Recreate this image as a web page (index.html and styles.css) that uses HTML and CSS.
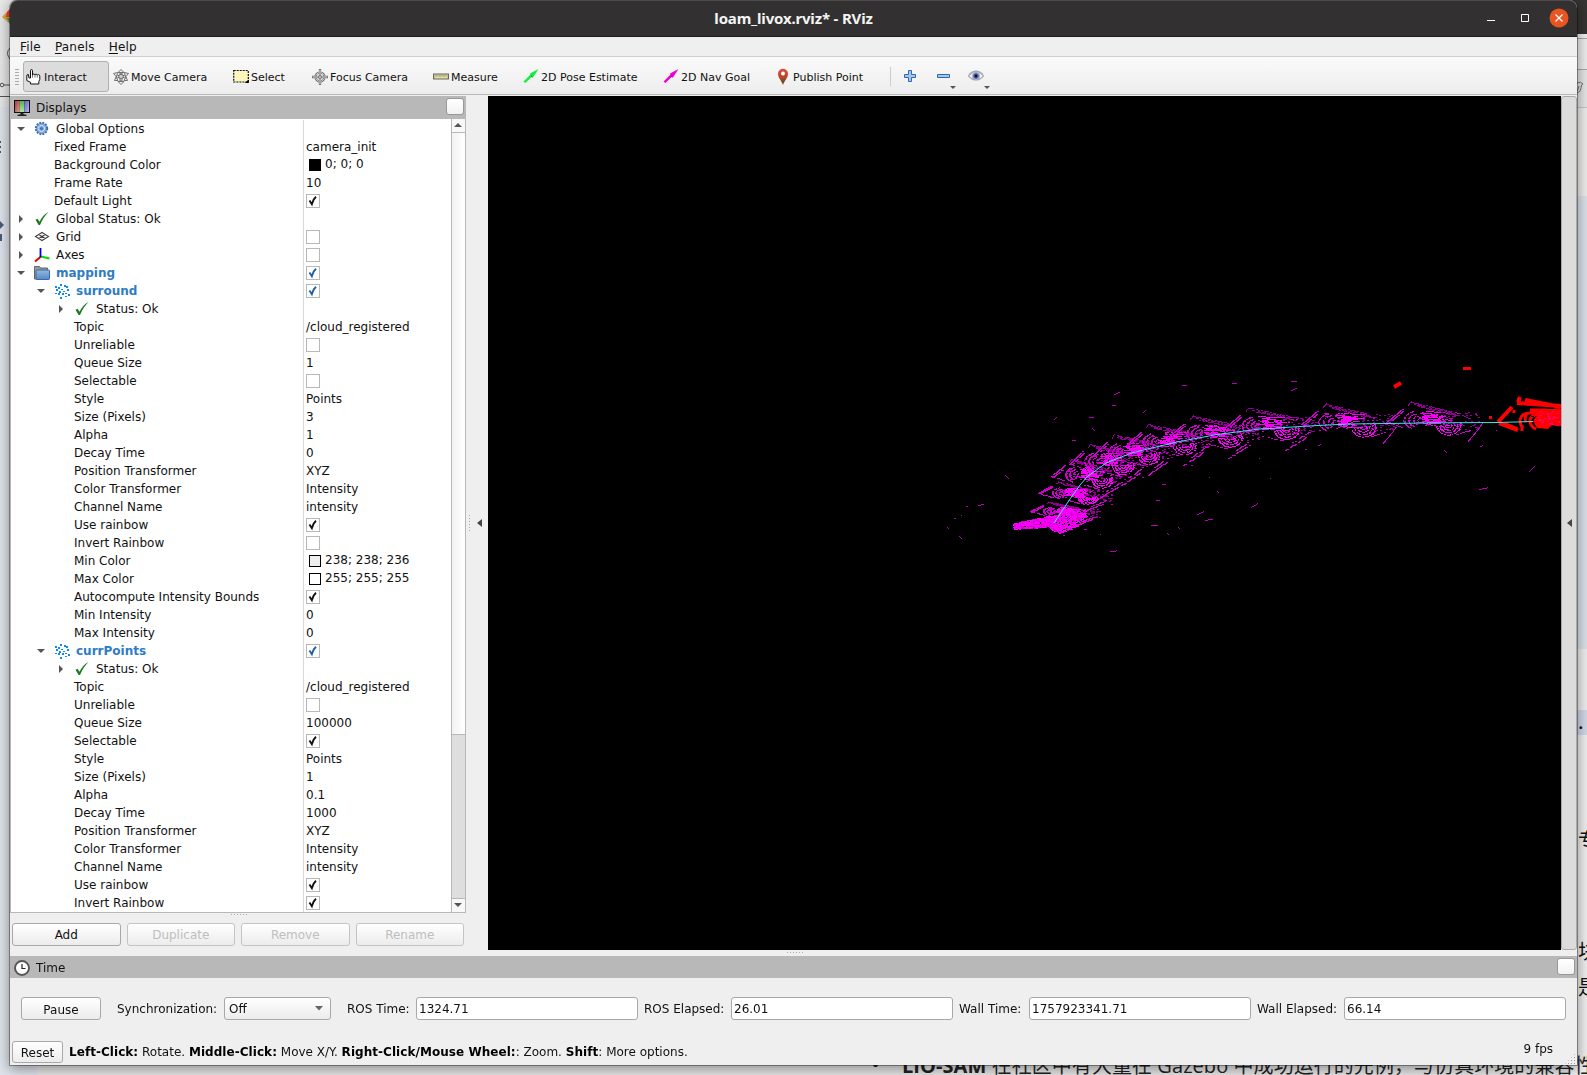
FILE: index.html
```html
<!DOCTYPE html>
<html lang="en">
<head>
<meta charset="utf-8">
<title>loam_livox.rviz* - RViz</title>
<link rel="stylesheet" href="styles.css">
</head>
<body>
<svg class="defs" width="0" height="0" aria-hidden="true">
  <defs>
    <linearGradient id="g-red" x1="0" y1="0" x2="1" y2="1"><stop offset="0" stop-color="#a03c3c"/><stop offset="1" stop-color="#e89a94"/></linearGradient>
    <linearGradient id="g-green" x1="0" y1="0" x2="0" y2="1"><stop offset="0" stop-color="#58b058"/><stop offset="1" stop-color="#a8e8a0"/></linearGradient>
    <linearGradient id="g-blue" x1="0" y1="0" x2="1" y2="1"><stop offset="0" stop-color="#6464b4"/><stop offset="1" stop-color="#b4b4f4"/></linearGradient>
    <linearGradient id="g-pin" x1="0" y1="0" x2="0" y2="1"><stop offset="0" stop-color="#e0503a"/><stop offset=".5" stop-color="#b8482a"/><stop offset="1" stop-color="#4e4420"/></linearGradient>
    <linearGradient id="g-folder" x1="0" y1="0" x2="0" y2="1"><stop offset="0" stop-color="#92b8e4"/><stop offset="1" stop-color="#5688c4"/></linearGradient>
    <symbol id="i-down" viewBox="0 0 8 8"><path d="M0 2h8L4 6z" fill="#555"/></symbol>
    <symbol id="i-right" viewBox="0 0 8 8"><path d="M2 0v8l4-4z" fill="#555"/></symbol>
    <symbol id="i-ok" viewBox="0 0 16 16"><path d="M1.500 8.700l2-.9 2 3C7.500 6.500 10.500 3 14.500 1 11 4.500 8.500 8 6 14H4.600z" fill="#1c7a20"/></symbol>
    <symbol id="i-gear" viewBox="0 0 16 16"><circle cx="7.500" cy="7.500" r="5.700" fill="#7ba4dc" stroke="#3c6cb4" stroke-width="2" stroke-dasharray="1.800 1.200"/><circle cx="7.500" cy="7.500" r="4.800" fill="#86abe0"/><circle cx="7.500" cy="7.500" r="2.900" fill="none" stroke="#fff" stroke-width="1" stroke-dasharray="1.500 .8"/><circle cx="7.500" cy="7.500" r="1.600" fill="#4474bc"/></symbol>
    <symbol id="i-grid" viewBox="0 0 16 16"><path d="M1.500 7.500L8 3.500l6.500 4L8 11.500zM4.700 5.500l6.600 4M11.300 5.500l-6.600 4" fill="none" stroke="#444" stroke-width="1.100"/></symbol>
    <symbol id="i-axes" viewBox="0 0 16 16"><path d="M7 9.500L1 14.500" stroke="#e00000" stroke-width="2"/><path d="M7 9.500l8.500 2" stroke="#00e000" stroke-width="2"/><path d="M6.500 1v9" stroke="#0000f0" stroke-width="1.800"/></symbol>
    <symbol id="i-folder" viewBox="0 0 16 16"><path d="M.5 14V1.500h5l1 1.500h7v11z" fill="#999" stroke="#666"/><rect x="2" y="5" width="13.500" height="9.500" rx=".7" fill="url(#g-folder)" stroke="#3a6aaa"/></symbol>
    <symbol id="i-cloud" viewBox="0 0 16 16" shape-rendering="crispEdges"><path d="M6 1h2v2H6zM1 3h2v2H1zM4 4h2v2H4zM10 2h2v2h-2zM12 3h2v2h-2zM2 6h2v2H2zM7 6h2v1H7zM13 6h2v2h-2zM5 8h2v2H5zM9 8h2v1H9zM1 10h2v1H1zM4 10h2v2H4zM8 10h2v2H8zM11 10h2v1h-2zM14 11h2v2h-2zM6 14h2v2H6zM11 13h2v1h-2z" fill="#0f8af0"/></symbol>
    <symbol id="i-check" viewBox="0 0 14 14"><path d="M3.500 6.600l2.300 3.600C6.500 7.200 8 4.500 10 2.800" fill="none" stroke="currentColor" stroke-width="1.900"/></symbol>
    <symbol id="i-monitor" viewBox="0 0 16 16"><path d="M0 0h16v13H0z" fill="#111"/><path d="M1 1h4.700v11H1z" fill="url(#g-red)"/><path d="M5.700 1h4.600v11H5.700z" fill="url(#g-green)"/><path d="M10.300 1H15v11h-4.700z" fill="url(#g-blue)"/><path d="M6.500 13h3v1.300l3 .5v1.200h-9v-1.200l3-.5z" fill="#222"/></symbol>
    <symbol id="i-clock" viewBox="0 0 16 16"><circle cx="8" cy="8" r="7" fill="#fff" stroke="#555" stroke-width="1.900"/><path d="M8 4V8.500h3.500" fill="none" stroke="#222" stroke-width="1.200"/></symbol>
    <symbol id="i-hand" viewBox="0 0 16 16"><path d="M4.500 9V1.700q0-1.200 1-1.200t1 1.200V6q.2-1 1.200-1t1.300 1q.2-.8 1.100-.8t1.200 1q.2-.6 1.200-.6 1.300.2 1.300 1.600v3.200l-1 2.100v2.500H4.500v-1.700L.8 11.500V7q0-1.700 1.600-1.500L3 9z" fill="#fff" stroke="#111" stroke-width="1"/><path d="M6.500 6v2.500M9 6v2.500M11.300 6.300v2.200" stroke="#444" stroke-width=".8"/></symbol>
    <symbol id="i-move" viewBox="0 0 16 16"><g fill="#eee" stroke="#555" stroke-width=".8"><path d="M7 4v8h2V4zM3 5.500l10 4M13 5.500l-10 4"/><path d="M8 .5l3 3H5zM8 15.500l-3-3h6z"/><path d="M.5 4.500l4-1L3.500 8zM15.500 4.500l-4-1 1 4.500zM1.500 11.500L3 8l2 3.500zM14.500 11.500L13 8l-2 3.500z"/><circle cx="8" cy="7.500" r="2.300" fill="#ccc"/></g></symbol>
    <symbol id="i-select" viewBox="0 0 16 16"><path d="M.7 1.500h14.600v11.500H.7z" fill="#fcf6bc" stroke="#111" stroke-width="1.200" stroke-dasharray="2 1"/><path d="M15.800 10.500V14h-4z" fill="#000"/></symbol>
    <symbol id="i-focus" viewBox="0 0 16 16"><circle cx="8" cy="8" r="4.500" fill="none" stroke="#666" stroke-width="2.200"/><circle cx="8" cy="8" r="4.500" fill="none" stroke="#ddd" stroke-width=".9"/><path d="M8 0v16M0 8h16" stroke="#777" stroke-width="2.300"/><path d="M8 1v14M1 8h14" stroke="#ddd" stroke-width=".9"/><circle cx="8" cy="8" r="1.500" fill="#ccc" stroke="#666" stroke-width=".7"/></symbol>
    <symbol id="i-measure" viewBox="0 0 16 16"><path d="M.6 5h14.800v5H.6z" fill="#e6dc9c" stroke="#666" stroke-width="1.200"/><path d="M3 5.500V8M5 5.500v2M7 5.500V8M9 5.500v2M11 5.500V8M13 5.500v2" stroke="#776" stroke-width=".7"/></symbol>
    <symbol id="i-arrow" viewBox="0 0 16 16"><path d="M.5 12.500l7-7L7 4.500 15.500 0 10 8.500l-1.400-.4L2.400 14z" fill="currentColor"/><path d="M7.500 5.500l1 2.700 1.500.3z" fill="#333" opacity=".6"/></symbol>
    <symbol id="i-pin" viewBox="0 0 12 18"><path d="M6 17C4.500 12.500 1 10 1 5.800A5 5 0 0 1 11 5.800C11 10 7.500 12.500 6 17z" fill="url(#g-pin)"/><circle cx="6" cy="5.500" r="1.900" fill="#fff"/></symbol>
    <symbol id="i-eye" viewBox="0 0 16 16"><path d="M.5 8Q8-1 15.500 8 8 16 .5 8z" fill="#f4f4f4" stroke="#aaa" stroke-width="1.200"/><path d="M1 6.500Q8-.5 15 6.500" fill="none" stroke="#aaa" stroke-width="1.300"/><circle cx="8" cy="8" r="3.900" fill="#9aaad8"/><circle cx="8" cy="8" r="2.700" fill="#5068ac"/><circle cx="8" cy="8" r="1.400" fill="#0a0a18"/></symbol>
  </defs>
</svg>

<div class="desktop" aria-hidden="true">
  <div class="behind-left"></div>
  <div class="behind-right"></div>
  <span class="doc-char c1">专</span>
  <span class="doc-char c2">块</span>
  <span class="doc-char c3">是</span>
  <span class="doc-char c4">.</span>
  <svg class="edge-marks" width="10" height="250"><path d="M2 17L10 9V24z" fill="#e8a43a"/><path d="M7 12l3-3v8H6z" fill="#ea4335"/><path d="M7 18h3v6z" fill="#2aa866"/><path d="M10 48q-5 5 0 11" fill="none" stroke="#555"/><circle cx="2" cy="85" r="1.800" fill="none" stroke="#555"/><path d="M4 85h6M0 96.500h10" stroke="#555"/><path d="M0 142h1M0 147h1M0 152h1" stroke="#555" stroke-width="2"/><path d="M0 221l4 4-4 4zM0 234h2v7H0z" fill="#4a5c80"/></svg>
  <svg class="edge-marks-right" width="10" height="20"><path d="M0 3q4-2 6 1-2 0-2 4 0 4-4 5M2 6q-1 4-2 5" fill="none" stroke="#777"/></svg>
  <p class="doc-line"><span class="bullet">•</span><b>LIO-SAM</b> 在社区中有大量在 Gazebo 中成功运行的先例，与仿真环境的兼容性</p>
</div>

<main class="window">
  <header class="titlebar">
    <span class="title">loam_livox.rviz* - RViz</span>
    <div class="win-buttons">
      <svg width="12" height="12"><path d="M2 8.500h8" stroke="#fff"/></svg>
      <svg width="12" height="12"><path d="M2.500 2.500h7v7h-7z" fill="none" stroke="#fff"/></svg>
      <svg width="20" height="20"><circle cx="10" cy="10" r="9.500" fill="#e95420"/><path d="M6.500 6.500l7 7M13.500 6.500l-7 7" stroke="#fff" stroke-width="1.300"/></svg>
    </div>
  </header>
  <nav class="menubar"><span><u>F</u>ile</span><span><u>P</u>anels</span><span><u>H</u>elp</span></nav>
  <div class="toolbar">
    <i class="grip"></i>
    <button class="tool t-interact active"><svg><use href="#i-hand"/></svg>Interact</button>
    <button class="tool t-move"><svg><use href="#i-move"/></svg>Move Camera</button>
    <button class="tool t-select"><svg><use href="#i-select"/></svg>Select</button>
    <button class="tool t-focus"><svg><use href="#i-focus"/></svg>Focus Camera</button>
    <button class="tool t-measure"><svg><use href="#i-measure"/></svg>Measure</button>
    <button class="tool t-pose"><svg class="green"><use href="#i-arrow"/></svg>2D Pose Estimate</button>
    <button class="tool t-goal"><svg class="magenta"><use href="#i-arrow"/></svg>2D Nav Goal</button>
    <button class="tool t-pin"><svg class="pin"><use href="#i-pin"/></svg>Publish Point</button>
    <i class="sep"></i>
    <svg class="plus" width="12" height="12"><path d="M4.500.5h3v4h4v3h-4v4h-3v-4h-4v-3h4z" fill="#a4c6ee" stroke="#3468ac"/></svg>
    <svg class="minus" width="20" height="24"><path d="M.5 9.500h12v3H.5z" fill="#a4c6ee" stroke="#3468ac"/><path d="M13 21h6l-3 3z" fill="#555"/></svg>
    <svg class="eye" width="22" height="24"><use href="#i-eye" x="0" y="3" width="16" height="16"/><path d="M16 21h6l-3 3z" fill="#555"/></svg>
  </div>

  <div class="workspace">
    <section class="displays">
      <div class="dock-title"><svg><use href="#i-monitor"/></svg>Displays<i class="dock-btn"></i></div>
      <div class="tree-box">
        <div class="tree">
          <div class="row l0"><b class="n"><svg class="tw"><use href="#i-down"/></svg><svg class="ic"><use href="#i-gear"/></svg>Global Options</b><span class="v"></span></div>
          <div class="row p1"><b class="n">Fixed Frame</b><span class="v">camera_init</span></div>
          <div class="row p1"><b class="n">Background Color</b><span class="v color"><i class="black"></i>0; 0; 0</span></div>
          <div class="row p1"><b class="n">Frame Rate</b><span class="v">10</span></div>
          <div class="row p1"><b class="n">Default Light</b><span class="v"><i class="cb"><svg><use href="#i-check"/></svg></i></span></div>
          <div class="row l0"><b class="n"><svg class="tw"><use href="#i-right"/></svg><svg class="ic"><use href="#i-ok"/></svg>Global Status: Ok</b><span class="v"></span></div>
          <div class="row l0"><b class="n"><svg class="tw"><use href="#i-right"/></svg><svg class="ic"><use href="#i-grid"/></svg>Grid</b><span class="v"><i class="cb"></i></span></div>
          <div class="row l0"><b class="n"><svg class="tw"><use href="#i-right"/></svg><svg class="ic"><use href="#i-axes"/></svg>Axes</b><span class="v"><i class="cb"></i></span></div>
          <div class="row l0 on"><b class="n"><svg class="tw"><use href="#i-down"/></svg><svg class="ic"><use href="#i-folder"/></svg>mapping</b><span class="v"><i class="cb"><svg><use href="#i-check"/></svg></i></span></div>
          <div class="row l1 on"><b class="n"><svg class="tw"><use href="#i-down"/></svg><svg class="ic"><use href="#i-cloud"/></svg>surround</b><span class="v"><i class="cb"><svg><use href="#i-check"/></svg></i></span></div>
          <div class="row l2"><b class="n"><svg class="tw"><use href="#i-right"/></svg><svg class="ic"><use href="#i-ok"/></svg>Status: Ok</b><span class="v"></span></div>
          <div class="row p2"><b class="n">Topic</b><span class="v">/cloud_registered</span></div>
          <div class="row p2"><b class="n">Unreliable</b><span class="v"><i class="cb"></i></span></div>
          <div class="row p2"><b class="n">Queue Size</b><span class="v">1</span></div>
          <div class="row p2"><b class="n">Selectable</b><span class="v"><i class="cb"></i></span></div>
          <div class="row p2"><b class="n">Style</b><span class="v">Points</span></div>
          <div class="row p2"><b class="n">Size (Pixels)</b><span class="v">3</span></div>
          <div class="row p2"><b class="n">Alpha</b><span class="v">1</span></div>
          <div class="row p2"><b class="n">Decay Time</b><span class="v">0</span></div>
          <div class="row p2"><b class="n">Position Transformer</b><span class="v">XYZ</span></div>
          <div class="row p2"><b class="n">Color Transformer</b><span class="v">Intensity</span></div>
          <div class="row p2"><b class="n">Channel Name</b><span class="v">intensity</span></div>
          <div class="row p2"><b class="n">Use rainbow</b><span class="v"><i class="cb"><svg><use href="#i-check"/></svg></i></span></div>
          <div class="row p2"><b class="n">Invert Rainbow</b><span class="v"><i class="cb"></i></span></div>
          <div class="row p2"><b class="n">Min Color</b><span class="v color"><i class="grey"></i>238; 238; 236</span></div>
          <div class="row p2"><b class="n">Max Color</b><span class="v color"><i></i>255; 255; 255</span></div>
          <div class="row p2"><b class="n">Autocompute Intensity Bounds</b><span class="v"><i class="cb"><svg><use href="#i-check"/></svg></i></span></div>
          <div class="row p2"><b class="n">Min Intensity</b><span class="v">0</span></div>
          <div class="row p2"><b class="n">Max Intensity</b><span class="v">0</span></div>
          <div class="row l1 on"><b class="n"><svg class="tw"><use href="#i-down"/></svg><svg class="ic"><use href="#i-cloud"/></svg>currPoints</b><span class="v"><i class="cb"><svg><use href="#i-check"/></svg></i></span></div>
          <div class="row l2"><b class="n"><svg class="tw"><use href="#i-right"/></svg><svg class="ic"><use href="#i-ok"/></svg>Status: Ok</b><span class="v"></span></div>
          <div class="row p2"><b class="n">Topic</b><span class="v">/cloud_registered</span></div>
          <div class="row p2"><b class="n">Unreliable</b><span class="v"><i class="cb"></i></span></div>
          <div class="row p2"><b class="n">Queue Size</b><span class="v">100000</span></div>
          <div class="row p2"><b class="n">Selectable</b><span class="v"><i class="cb"><svg><use href="#i-check"/></svg></i></span></div>
          <div class="row p2"><b class="n">Style</b><span class="v">Points</span></div>
          <div class="row p2"><b class="n">Size (Pixels)</b><span class="v">1</span></div>
          <div class="row p2"><b class="n">Alpha</b><span class="v">0.1</span></div>
          <div class="row p2"><b class="n">Decay Time</b><span class="v">1000</span></div>
          <div class="row p2"><b class="n">Position Transformer</b><span class="v">XYZ</span></div>
          <div class="row p2"><b class="n">Color Transformer</b><span class="v">Intensity</span></div>
          <div class="row p2"><b class="n">Channel Name</b><span class="v">intensity</span></div>
          <div class="row p2"><b class="n">Use rainbow</b><span class="v"><i class="cb"><svg><use href="#i-check"/></svg></i></span></div>
          <div class="row p2"><b class="n">Invert Rainbow</b><span class="v"><i class="cb"><svg><use href="#i-check"/></svg></i></span></div>
        </div>
        <div class="scrollbar">
          <svg class="up" width="14" height="13"><path d="M2 8h8L6 4z" fill="#555"/></svg>
          <i class="thumb"></i>
          <svg class="dn" width="14" height="14"><path d="M2 4h8L6 8z" fill="#555"/></svg>
        </div>
      </div>
      <i class="dots-h"></i>
      <div class="actions"><button class="btn">Add</button><button class="btn off">Duplicate</button><button class="btn off">Remove</button><button class="btn off">Rename</button></div>
    </section>
    <div class="splitter"><i class="dots-v"></i><svg width="5" height="8"><path d="M5 0v8L0 4z" fill="#444"/></svg></div>
    <canvas id="view" class="view" width="1073" height="854"></canvas>
    <div class="collapse"><svg width="5" height="8"><path d="M5 0v8L0 4z" fill="#444"/></svg></div>
  </div>
  <div class="hsplit"><i class="dots-h"></i></div>

  <section class="time">
    <div class="dock-title"><svg><use href="#i-clock"/></svg>Time<i class="dock-btn"></i></div>
    <div class="time-row">
      <button class="btn pause">Pause</button>
      <span class="lb-sync">Synchronization:</span><div class="combo">Off<svg width="8" height="5"><path d="M0 0h8L4 4.500z" fill="#666"/></svg></div>
      <span class="lb-rt">ROS Time:</span><div class="field">1324.71</div>
      <span class="lb-re">ROS Elapsed:</span><div class="field">26.01</div>
      <span class="lb-wt">Wall Time:</span><div class="field">1757923341.71</div>
      <span class="lb-we">Wall Elapsed:</span><div class="field">66.14</div>
    </div>
  </section>
  <footer class="status">
    <button class="btn reset">Reset</button>
    <p><b>Left-Click:</b> Rotate. <b>Middle-Click:</b> Move X/Y. <b>Right-Click/Mouse Wheel:</b>: Zoom. <b>Shift</b>: More options.</p>
    <span class="fps">9 fps</span>
    <i class="size-grip"></i>
  </footer>
</main>
<script src="cloud.js"></script>
</body>
</html>
```
FILE: styles.css
```css
* { box-sizing: border-box; }
body { margin: 0; width: 1587px; height: 1075px; overflow: hidden; position: relative; background: #e9e9e9; font: 12px "DejaVu Sans", sans-serif; color: #111; }
button { font: inherit; color: inherit; margin: 0; padding: 0; }
i { font-style: normal; display: block; flex: none; }
svg { display: block; flex: none; }
.defs { position: absolute; }

.desktop { position: absolute; inset: 0; overflow: hidden; }
.behind-left { position: absolute; left: 0; top: 107px; width: 37px; height: 968px; background: #e0e5ed; }
.behind-right { position: absolute; left: 1570px; top: 0; width: 17px; height: 1075px; background: linear-gradient(#363533 0 34px, #f2f2f2 34px 38px, #aaa 38px 39px, #f0f0f0 39px 69px, #aaa 69px 70px, #e8e8e8 70px 107px, #c8c8c8 107px 108px, #f0efee 108px 196px, #dfe4ec 196px 649px, #f0f0f0 649px 710px, #d4dae8 710px 735px, #f1f1f1 735px); }
.edge-marks { position: absolute; left: 0; top: 0; }
.edge-marks-right { position: absolute; left: 1577px; top: 80px; }
.doc-char { position: absolute; left: 1578px; font: 20px/24px "Noto Sans CJK SC", sans-serif; }
.c1 { top: 828px; } .c2 { top: 939px; } .c3 { top: 975px; } .c4 { left: 1578px; top: 709px; }
.doc-line { position: absolute; left: 871px; top: 1049px; margin: 0; width: 740px; white-space: nowrap; font: 20px/34px "Open Sans", "Noto Sans CJK SC", sans-serif; color: #222; letter-spacing: .06px; }
.bullet { display: inline-block; width: 31px; font-size: 24px; line-height: 20px; height: 20px; }

.window { position: relative; margin-left: 10px; width: 1567px; height: 1065px; background: #efefef; display: flex; flex-direction: column; border-radius: 8px 8px 0 0; box-shadow: 0 0 0 1px rgba(0,0,0,.35), 0 3px 14px 1px rgba(0,0,0,.42); }
.titlebar { height: 37px; flex: none; display: flex; align-items: center; justify-content: center; background: #323030; border-top: 1px solid #4c4a4a; border-bottom: 1px solid #1e1c1c; border-radius: 8px 8px 0 0; position: relative; color: #f4f4f4; }
.title { font: bold 15px "Noto Sans", sans-serif; letter-spacing: -.18px; margin-top: -2px; }
.win-buttons { position: absolute; right: 8px; top: 7px; display: flex; align-items: center; gap: 22px; }
.win-buttons svg:last-child { margin-left: -4px; }
.menubar { height: 20px; flex: none; display: flex; padding-left: 10px; gap: 14px; line-height: 20px; letter-spacing: .2px; border-bottom: 1px solid #d0d0d0; }
.menubar u { text-underline-offset: 2px; }

.toolbar { height: 38px; flex: none; display: flex; align-items: center; background: linear-gradient(#fafafa, #ededed); border-bottom: 1px solid #b8b8b8; padding: 1px 0 0 5px; font-size: 11px; }
.grip { width: 4px; height: 17px; margin-right: 4px; background: radial-gradient(circle, #aaa .7px, transparent .8px) 0 0 / 2px 3px; }
.tool { display: flex; align-items: center; gap: 2px; height: 31px; flex: none; padding: 2px 0 0 2px; border: 1px solid transparent; background: none; text-align: left; white-space: nowrap; }
.tool svg { width: 16px; height: 16px; margin-top: -1px; }
.tool.active { background: #dcdcdc; border-color: #b0b0b0; border-radius: 3px; }
.t-interact { width: 86px; margin-right: 1px; }
.t-move { width: 120px; } .t-select { width: 79px; } .t-focus { width: 121px; } .t-measure { width: 90px; }
.t-pose { width: 140px; } .t-goal { width: 115px; } .t-pin { width: 116px; }
.tool .pin { width: 12px; height: 18px; margin-right: 2px; }
.t-pin { margin-left: -1px; }
.green { color: #12f03c; } .magenta { color: #f000d8; }
.sep { width: 1px; height: 19px; background: #ccc; margin-right: 13px; }
.plus { margin-right: 21px; }
.minus { margin: 2px 11px 0 0; }
.eye { margin-top: 2px; }

.workspace { display: flex; height: 854px; padding-top: 1px; flex: none; }
.displays { width: 456px; display: flex; flex-direction: column; }
.dock-title { height: 23px; flex: none; display: flex; align-items: center; background: #b8b8b8; padding: 0 2px 0 4px; }
.dock-title svg { width: 16px; height: 16px; margin-right: 6px; }
.dock-btn { margin: -2px 0 0 auto; width: 18px; height: 17px; border: 1px solid #999; border-radius: 3px; background: linear-gradient(#fff, #f2f2f2); }
.tree-box { display: flex; height: 794px; flex: none; border: 1px solid #b8b8b8; border-top: 0; background: #fff; }
.tree { flex: 1; padding-top: 1px; overflow: hidden; }
.row { display: grid; grid-template-columns: 293px 1fr; height: 18px; line-height: 18px; white-space: nowrap; }
.n { display: flex; align-items: center; height: 18px; font-weight: normal; border-right: 1px solid #d8d8d8; }
.on .n { font-weight: bold; color: #2e7cc4; }
.tw { width: 8px; height: 8px; margin: -1px 9px 0 6px; }
.ic { width: 16px; height: 16px; margin: -1px 6px 0 0; }
.l1 .n { padding-left: 20px; } .l2 .n { padding-left: 40px; }
.p1 .n { padding-left: 43px; } .p2 .n { padding-left: 63px; }
.v { display: flex; align-items: center; height: 18px; padding-left: 2px; }
.cb { width: 14px; height: 14px; margin-top: -1px; border: 1px solid #b8b8b8; background: #fff; }
.cb svg { width: 14px; height: 14px; margin: -1px; overflow: visible; }
.on .cb { color: #1c60a8; }
.color { padding: 0 0 2px 5px; }
.color i { width: 12px; height: 12px; margin: 1px 4px 0 0; border: 1px solid #000; background: #fff; }
.color .black { background: #000; } .color .grey { background: #eeeeec; }
.scrollbar { width: 14px; border-left: 1px solid #b8b8b8; background: #dedede; display: flex; flex-direction: column; }
.scrollbar svg { background: #f8f8f8; margin-left: -1px; border-left: 1px solid #b8b8b8; }
.thumb { height: 603px; border-top: 1px solid #b8b8b8; border-bottom: 1px solid #b8b8b8; background: linear-gradient(90deg, #f2f2f2, #fff); }
.scrollbar .dn { margin-top: auto; border-top: 1px solid #b8b8b8; }
.dots-h { width: 17px; height: 1px; background: repeating-linear-gradient(90deg, #aaa 0 1px, transparent 1px 3px); align-self: center; margin: 1px 0 0 2px; }
.displays .dots-h { margin-top: 1px; }
.actions { display: flex; gap: 6px; padding: 8px 2px 0; }
.btn { height: 23px; border: 1px solid #a8a8a8; border-radius: 3px; background: linear-gradient(#fff, #ececec); text-align: center; }
.actions .btn { flex: 1; }
.btn.off { color: #bebebe; border-color: #c4c4c4; }
.splitter { width: 22px; height: 854px; display: flex; align-items: center; gap: 8px; padding-left: 3px; }
.dots-v { width: 1px; height: 17px; background: repeating-linear-gradient(#aaa 0 1px, transparent 1px 3px); }
.splitter svg { margin-left: -1px; }
.view { display: block; flex: none; width: 1073px; height: 854px; background: #000; }
.collapse { width: 16px; height: 854px; display: flex; align-items: center; justify-content: center; background: #dcdcdc; border: 1px solid #aaa; border-radius: 3px; }
.hsplit { height: 7px; flex: none; display: flex; justify-content: center; align-items: flex-start; }
.hsplit .dots-h { margin: 3px 0 0 4px; align-self: flex-start; }

.time { height: 83px; flex: none; }
.time .dock-title { height: 22px; padding-top: 2px; }
.time .dock-btn { margin-top: -3px; }
.time-row { display: flex; align-items: center; padding: 18px 0 0 11px; line-height: 22px; white-space: nowrap; }
.time-row span { padding-top: 2px; flex: none; }
.time-row > div, .time-row > button { flex: none; }
.pause { width: 80px; margin-right: 16px; padding-top: 1px; }
.lb-sync { width: 107px; } .lb-rt { width: 69px; } .lb-re { width: 87px; } .lb-wt { width: 70px; } .lb-we { width: 87px; }
.combo { width: 107px; height: 23px; margin-right: 16px; border: 1px solid #a8a8a8; border-radius: 3px; background: linear-gradient(#fff, #ececec); display: flex; align-items: center; justify-content: space-between; padding: 1px 7px 0 4px; }
.field { width: 222px; height: 23px; border: 1px solid #a8a8a8; border-radius: 3px; background: #fff; padding-left: 2px; margin-right: 6px; line-height: 23px; }
.status { height: 27px; flex: none; display: flex; padding: 2px 2px 0; position: relative; }
.reset { width: 51px; height: 22px; margin-right: 6px; padding-top: 1px; }
.status p { margin: 0; line-height: 23px; white-space: nowrap; }
.status p b { color: #000; letter-spacing: .05px; }
.fps { margin: 0 22px 0 auto; line-height: 16px; }
.size-grip { position: absolute; right: 1px; bottom: 1px; width: 12px; height: 12px; clip-path: polygon(100% 0, 100% 100%, 0 100%); background: radial-gradient(circle, #999 .7px, transparent .8px) 0 0 / 3px 3px; }
```
FILE: cloud.js
```
// Draws the accumulated point cloud, the live scan and the trajectory, seen from above.
const ctx = document.getElementById('view').getContext('2d');
ctx.translate(-488, -96);
let seed = 7;
const rnd = () => (seed = (seed * 16807) % 2147483647) / 2147483647;
const dot = (x, y, w = 1, h = 1) => ctx.fillRect(Math.round(x), Math.round(y), w, h);

// One scan around (cx, cy), turned by rot and scaled by sx and sy.
function scan(cx, cy, rot, sx, sy, bright, mid, dim) {
  const c = Math.cos(rot), n = Math.sin(rot);
  const put = (x, y, w = 1) => {
    x *= sx; y *= sy;
    dot(cx + x * c - y * n, cy + x * n + y * c, w, 1);
  };
  const line = (x1, y1, x2, y2, gap, w = 1) => {
    const steps = Math.hypot(x2 - x1, y2 - y1) / w * 1.3;
    for (let i = 0; i < steps; i++) if (rnd() > gap) put(x1 + (x2 - x1) * i / steps, y1 + (y2 - y1) * i / steps, w);
  };
  const ring = (x, y, rx, ry, a, b, gap) => {
    const st = .9 / Math.max(rx, ry);
    for (let t = a; t < b; t += st) if (rnd() > gap) put(x + Math.cos(t) * rx, y + Math.sin(t) * ry, rnd() > .6 ? 2 : 1);
  };
  ctx.fillStyle = dim;
  for (let k = 0; k < 3; k++) line(-19 + k * 3, -17 + k * 2, 20 + k * 4, -8 + k * 2.3, .25, 2);
  for (let k = 0; k < 60; k++) put(14 + rnd() * 34, -7 + rnd() * 17, 2);
  line(-22, -14, -19, -18, .1);
  ctx.fillStyle = mid;
  line(-44, 3, -28, -10, .05, 2); line(-42, 4, -27, -8, .15, 2);
  line(-44, 3, -26, 9, .35, 2);
  if (sy < .99) { line(16, 27, 38, 14, .1, 2); line(24, 19, 42, 8, .3, 2); line(-6, 12, 14, 17, .4, 2); }
  else { line(38, 22, 53, 3, .1); line(26, 15, 40, 11, .3, 2); }
  for (let r = 5; r < 20; r += 4) ring(-7, 1, r * 1.15, r * .6, 2.2, 4.2, .3);
  for (let k = 0; k < 40; k++) put(-22 + rnd() * 50, -8 + rnd() * 16, 2);
  ctx.fillStyle = bright;
  for (let r = 3; r < 14; r += 3) ring(18, 6, r, r * .8, -.3, 3.1, .25);
  for (let k = 0; k < 8; k++) {
    const x = -11 + rnd() * 9, w = 12 + rnd() * 16;
    line(x, -8 + k * 1.9, x + w, -7 + k * 1.9, .2, 2);
  }
  for (let k = 0; k < 34; k++) put(-8 + rnd() * 18, -5 + rnd() * 9, 4);
}

const M = '#f800f8', MM = '#cc00cc', D = '#900090';
[[1063, 511, .04, .76, .5], [1073, 493, .06, .8, .62], [1087, 474, .02, .82, .85], [1107, 460, -.02, .86, .94],
 [1132, 450, -.05, .9, .94], [1167, 440, -.04, .94, .96], [1212, 432, -.03, .98, .97], [1268, 424, -.02, 1, .98],
 [1345, 421, 0, 1, 1], [1430, 419, 0, 1, 1]]
  .forEach(([x, y, r, sx, sy]) => scan(x, y, r, sx, sy, M, MM, D));

// Stationary start of the run: a solid patch with a pointed left end.
for (let i = 0; i < 1500; i++) {
  const x = 1013 + Math.pow(rnd(), .8) * 72, top = 523 - (x - 1013) * .2;
  const bottom = x < 1050 ? 529 - (x - 1013) * .06 : 533 - Math.abs(x - 1060) * .4;
  ctx.fillStyle = rnd() > .25 ? M : MM;
  if (x < 1078 || rnd() > .6) dot(x, top + rnd() * Math.max(0, bottom - top), 2);
}

// Isolated returns: x, y, length, slope.
ctx.fillStyle = '#b800b8';
[[1182,385,5,0],[1232,383,5,0],[1114,394,6,-.4],[1112,405,4,0],[1089,417,5,0],[1143,412,3,-1],[1054,419,3,-1],[1092,428,3,1],[1072,440,4,0],
 [1005,475,4,1],[978,505,6,-.2],[966,506,2,0],[961,515,1,0],[954,518,2,0],[947,527,2,1],[959,536,3,1],[1110,551,7,-.1],[1151,525,7,0],[1197,514,7,-.5],
 [1205,520,8,-.2],[1251,507,7,-.6],[1162,484,4,0],[1156,500,4,0],[1217,491,2,1],[1209,477,1,0],[1191,465,2,0],[1178,527,2,1],[1167,533,2,1],[1142,477,2,0],
 [1111,504,2,0],[1084,529,3,0],[1063,535,2,0],[1291,381,6,0],[1291,390,6,-.5],[1305,449,2,0],[1318,445,3,-.3],[1259,458,1,0],[1270,478,1,0],[1444,450,3,1],
 [1480,446,3,-.3],[1479,489,9,-.2],[1529,471,6,-1],[1496,430,1,0],[1100,534,1,0],[1129,481,1,0]]
  .forEach(([x, y, n, m]) => { for (let i = 0; i < n; i++) dot(x + i, y + i * m); });

// Live scan, drawn with thick strokes.
ctx.strokeStyle = '#ff0000';
ctx.fillStyle = '#ff0000';
ctx.lineWidth = 4;
ctx.stroke(new Path2D('M1498 422L1512 407M1525 400L1561 407M1517 403L1561 406M1518 402l2-5M1499 423l19 7M1505 424l12 5M1394 387l7-4'));
ctx.lineWidth = 3;
ctx.stroke(new Path2D('M1514 410v3M1463 368.500h8M1534 413q-13-1-14 7q0 5 3 8M1527 414q-3 3-1 8M1538 414q-9 2-8 8q1 5 6 7M1522 425v6M1530 410h30'));
ctx.fillRect(1489, 416, 3, 3);
ctx.fill(new Path2D('M1530 409H1561V427L1552 425L1548 429L1537 428L1533 421L1538 414L1530 413Z'));
ctx.fillStyle = '#000';
ctx.fill(new Path2D('M1561 426v3h-5v-2z'));
ctx.fillRect(1531, 416, 3, 1);
ctx.fillRect(1546, 408, 8, 1);
ctx.fillStyle = '#ff0070';
for (let i = 0; i < 45; i++) dot(1537 + rnd() * 22, 411 + rnd() * 13, 2, 1);

ctx.strokeStyle = '#38e4ec';
ctx.lineWidth = 1;
ctx.beginPath();
[[1054,523],[1070,499],[1080,485],[1088,476],[1107,462.500],[1133,452.500],[1177,442],[1217,434.500],[1260,429],[1317,425.500],[1350,424],[1440,422.800],[1497,422.500],[1533,421.500]]
  .forEach(([x, y], i) => i ? ctx.lineTo(x, y) : ctx.moveTo(x, y));
ctx.stroke();
```
